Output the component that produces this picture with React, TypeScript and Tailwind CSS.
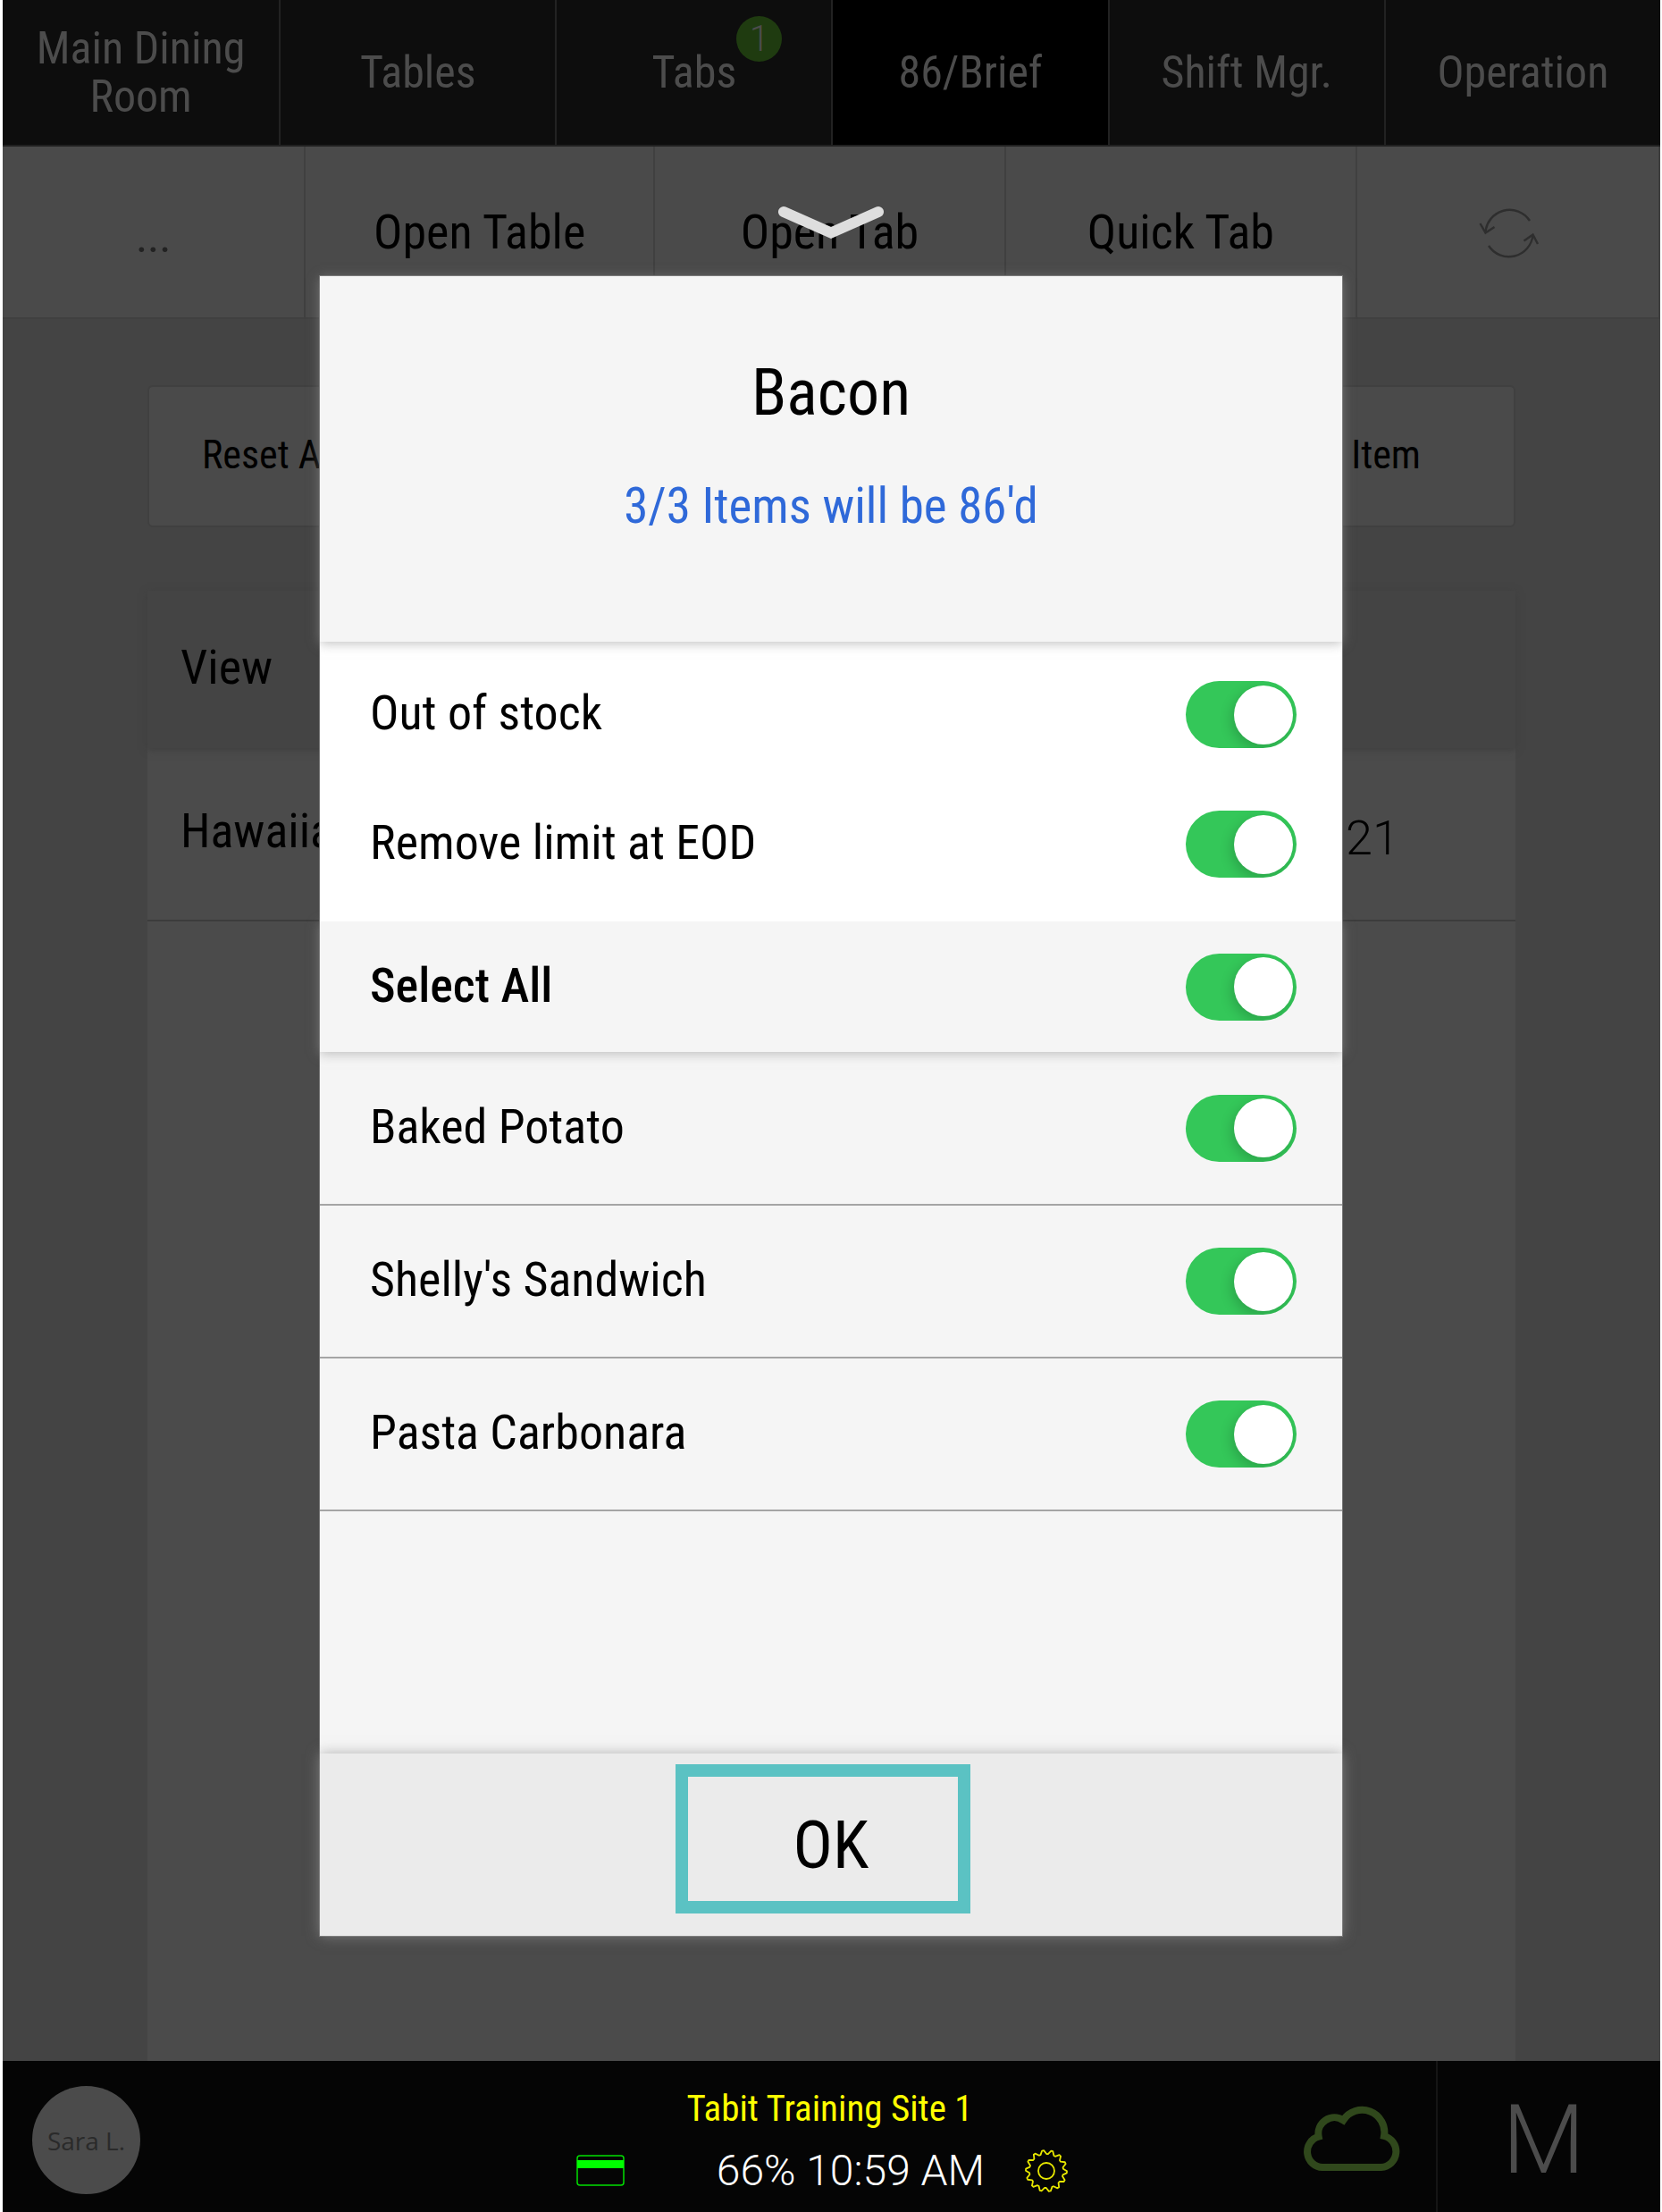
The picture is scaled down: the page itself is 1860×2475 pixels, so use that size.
import clsx from 'clsx';

interface IToggleRowProps {
	id: string;
	label: string;
	className: string;
}

const navItems = [
	{ name: 'Main Dining Room' },
	{ name: 'Tables' },
	{ name: 'Tabs', count: 1 },
	{ name: '86/Brief', active: true },
	{ name: 'Shift Mgr.' },
	{ name: 'Operation' },
];

const menuItems = [
	{ id: 'baked-potato', label: 'Baked Potato' },
	{ id: 'shellys-sandwich', label: "Shelly's Sandwich" },
	{ id: 'pasta-carbonara', label: 'Pasta Carbonara' },
];

const GEAR_TEETH = 14;

// outline of the gear, four points per tooth
const gearPoints = Array.from({ length: GEAR_TEETH * 4 }, (_, i) => {
	const radius = i % 4 < 2 ? 23 : 19;
	const angle = ((i + (i % 2 ? -0.1 : 0.1)) / (GEAR_TEETH * 4)) * Math.PI * 2;
	return `${25 + radius * Math.cos(angle)},${25 + radius * Math.sin(angle)}`;
}).join(' ');

function RefreshIcon() {
	return (
		<svg width="70" height="70" viewBox="0 0 70 70" fill="none" stroke="#2e2e2e" strokeWidth="2.4">
			<path d="M58 20A27 27 0 0 0 8.5 33" />
			<path d="M2.5 23l6 10.5L18.5 27" />
			<path d="M12 48a27 27 0 0 0 49.5-12" />
			<path d="M51.5 42.5l10-7L67 46" />
		</svg>
	);
}

function CardIcon() {
	return (
		<svg width="54" height="36" viewBox="0 0 54 36" fill="none">
			<rect x="1" y="1" width="52" height="33" rx="3" stroke="#00e000" strokeWidth="1.5" />
			<rect x="1" y="6" width="52" height="9" fill="#00ff00" />
		</svg>
	);
}

function GearIcon() {
	return (
		<svg width="50" height="50" viewBox="0 0 50 50" fill="none" stroke="#e8e800" strokeWidth="1.8">
			<polygon points={gearPoints} strokeLinejoin="round" />
			<circle cx="25" cy="25" r="9" />
		</svg>
	);
}

function CloudIcon() {
	return (
		<svg width="110" height="80" viewBox="0 0 110 80" fill="none" stroke="#30481c" strokeWidth="8">
			<path d="M22 74A17.5 17.5 0 0 1 17.7 39.7A18 18 0 0 1 45.3 21.3A25 25 0 0 1 91 39A17.8 17.8 0 0 1 87.7 74Z" />
		</svg>
	);
}

function ChevronIcon() {
	return (
		<svg width="120" height="48" viewBox="0 0 120 48" fill="none">
			<path d="M7 9L60 32.5L113 9" stroke="#dedede" strokeWidth="12" strokeLinecap="round" />
		</svg>
	);
}

function ToggleRow({ id, label, className }: IToggleRowProps) {
	return (
		<div className={clsx('flex items-center justify-between pl-14 pr-[51px]', className)}>
			<label htmlFor={id} className="pb-1">
				{label}
			</label>
			<input
				id={id}
				type="checkbox"
				defaultChecked
				className="flex h-[75px] w-[124px] shrink-0 appearance-none items-center overflow-hidden rounded-full bg-gray-300 px-1 before:size-[66px] before:rounded-full before:bg-white before:shadow-[-3px_5px_14px_rgba(0,0,0,0.18)] checked:justify-end checked:bg-[#34c759]"
			/>
		</div>
	);
}

function TopNav() {
	return (
		<nav className="grid h-[164px] grid-cols-6 border-b-2 border-[#202020] bg-[#0d0d0d] text-[50px] leading-[54px] text-[#4c4c4c]">
			{navItems.map((item) => (
				<a
					key={item.name}
					href="#"
					className={clsx(
						'flex items-center justify-center border-l-2 border-[#222222] px-6 text-center first:border-l-0',
						item.active && 'bg-black',
					)}
				>
					<span className="relative">
						{item.name}
						{item.count && (
							<span className="absolute -top-9 left-full flex size-[51px] items-center justify-center rounded-full bg-[#1f3b10] font-['Roboto'] text-[40px] font-light">
								{item.count}
							</span>
						)}
					</span>
				</a>
			))}
		</nav>
	);
}

function Toolbar() {
	return (
		<div className="grid h-[193px] grid-cols-[340fr_391fr_394fr_393fr_340fr] border-b-2 border-[#404040] bg-[#4a4a4a]">
			<button className="border-r-2 border-[#404040] pt-3 text-[50px] text-[#222222]">...</button>
			<button className="border-r-2 border-[#404040]">Open Table</button>
			<button className="border-r-2 border-[#404040]">Open Tab</button>
			<button className="border-r-2 border-[#404040]">Quick Tab</button>
			<button
				aria-label="Refresh"
				className="flex items-center justify-center border-r-2 border-[#404040] pl-1 pt-1"
			>
				<RefreshIcon />
			</button>
		</div>
	);
}

function StockList() {
	return (
		<main className="flex flex-1 flex-col bg-[#444444] px-[162px] pt-[74px]">
			<div className="flex h-[159px] items-center justify-between rounded-md border-2 border-[#404040] bg-[#4a4a4a] pb-1 pl-[59px] pr-[104px] text-[44px]">
				<button>Reset All</button>
				<button>Limit Item</button>
			</div>
			<div className="mt-[71px] flex-1 bg-[#4b4b4b]">
				<table className="w-full text-left">
					<thead>
						<tr className="h-[176px] bg-[#444444] shadow-[0_2px_8px_#3e3e3e]">
							<th colSpan={2} className="pb-1.5 pl-[37px] font-normal">
								View
							</th>
						</tr>
					</thead>
					<tbody>
						<tr className="h-[193px] border-b-2 border-[#3c3c3c]">
							<td className="pb-2 pl-[37px]">Hawaiian</td>
							<td className="pr-[130px] pt-2 text-right font-['Roboto'] font-light">21</td>
						</tr>
					</tbody>
				</table>
			</div>
		</main>
	);
}

function StatusBar() {
	return (
		<footer className="grid h-[169px] grid-cols-[1fr_571px_1fr] bg-[#050505]">
			<div className="flex items-center pl-[33px] pt-2">
				<button className="size-[121px] rounded-full bg-[#4b4b4b] font-['Open_Sans'] text-[28px] text-[#2a2a2a]">
					Sara L.
				</button>
			</div>
			<div className="flex flex-col justify-center pt-1.5">
				<p className="pr-1 text-center text-[41px] leading-[70px] text-[#ffff00]">Tabit Training Site 1</p>
				<div className="flex h-[70px] items-center pr-5 font-['Roboto'] text-[48px] font-light text-white">
					<CardIcon />
					<p className="flex-1 whitespace-nowrap text-right">66% 10:59 AM</p>
					<span className="ml-11">
						<GearIcon />
					</span>
				</div>
			</div>
			<div className="flex items-center justify-end">
				<CloudIcon />
				<button className="ml-[39px] h-full w-[251px] border-l-2 border-[#151515] pr-3 pt-2 font-['Roboto'] text-[107px] font-light leading-none text-[#4c4c4c]">
					M
				</button>
			</div>
		</footer>
	);
}

function ItemModal() {
	return (
		<div className="absolute inset-x-0 top-0 flex flex-col items-center pt-[228px]">
			<button aria-label="Close" className="mb-8 h-12">
				<ChevronIcon />
			</button>
			<section
				role="dialog"
				aria-labelledby="modal-title"
				className="w-full max-w-[1146px] border border-[#757575] bg-[#f5f5f5]"
			>
				<header className="relative z-20 bg-[#f5f5f5] pb-28 pt-[81px] text-center shadow-[0_2px_12px_rgba(150,150,150,0.6)]">
					<h1 id="modal-title" className="text-[72px] leading-[100px]">
						Bacon
					</h1>
					<p className="mt-9 text-[55px] leading-[80px] text-[#2f69d9]">3/3 Items will be 86'd</p>
				</header>
				<div className="relative z-10 bg-white pb-3.5 pt-[9px]">
					<ToggleRow id="out-of-stock" label="Out of stock" className="h-[145px]" />
					<ToggleRow id="remove-limit" label="Remove limit at EOD" className="h-[145px]" />
				</div>
				<ToggleRow
					id="select-all"
					label="Select All"
					className="relative h-[146px] bg-[#f5f5f5] font-medium shadow-[0_2px_12px_rgba(150,150,150,0.6)]"
				/>
				<div className="pb-[271px]">
					{menuItems.map((item) => (
						<ToggleRow
							key={item.id}
							id={item.id}
							label={item.label}
							className="h-[171px] border-b-2 border-[#a5a5a5] first:h-[172px]"
						/>
					))}
				</div>
				<footer className="relative h-[204px] bg-[#ebebeb] shadow-[0_0_14px_rgba(150,150,150,0.7)]">
					<button className="h-full w-full text-[74px]">OK</button>
					<span className="pointer-events-none absolute left-[398px] top-3 h-[167px] w-[330px] border-[14px] border-[#5bc2c3]" />
				</footer>
			</section>
		</div>
	);
}

export default function App() {
	return (
		<div className="relative flex min-h-screen flex-col bg-white pl-[3px] pr-0.5 font-['Roboto_Condensed','Liberation_Sans',sans-serif] text-[54px] text-black">
			<TopNav />
			<Toolbar />
			<StockList />
			<StatusBar />
			<ItemModal />
		</div>
	);
}
